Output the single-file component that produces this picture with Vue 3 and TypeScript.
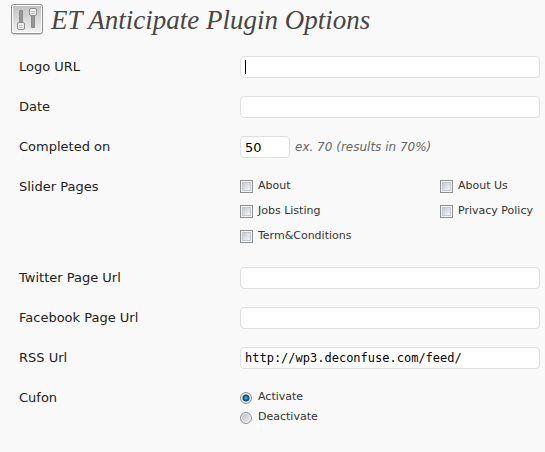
<script setup lang="ts">
import { ref } from 'vue'

interface Option {
  id: string
  label: string
}

const logoUrl = ref('')
const date = ref('')
const completed = ref('50')
const twitter = ref('')
const facebook = ref('')
const rss = ref('http://wp3.deconfuse.com/feed/')
const cufon = ref('activate')
const selectedPages = ref<string[]>([])

const pages: Option[] = [
  { id: 'about', label: 'About' },
  { id: 'about-us', label: 'About Us' },
  { id: 'jobs', label: 'Jobs Listing' },
  { id: 'privacy', label: 'Privacy Policy' },
  { id: 'terms', label: 'Term&Conditions' },
]

const cufonModes: Option[] = [
  { id: 'activate', label: 'Activate' },
  { id: 'deactivate', label: 'Deactivate' },
]
</script>

<template>
  <main class="options">
    <header class="heading">
      <svg class="heading-icon" width="32" height="31" viewBox="0 0 32 31" aria-hidden="true">
        <defs>
          <linearGradient id="plate" x1="0" y1="0" x2="0" y2="1">
            <stop offset="0" stop-color="#c2c2c2" />
            <stop offset="1" stop-color="#f1f1f1" />
          </linearGradient>
        </defs>
        <rect x="0.5" y="0.5" width="31" height="29" rx="2" fill="#fff" stroke="#8c8c8c" />
        <rect x="2" y="2" width="28" height="26" fill="url(#plate)" />
        <path d="M2 30.5H30" stroke="#d2d2d2" />
        <rect x="8" y="6" width="4" height="14" rx="1" fill="#8a8a8a" />
        <rect x="20" y="10" width="4" height="14" rx="1" fill="#8a8a8a" />
        <path d="M10 7V19M22 11V23" stroke="#a4a4a4" stroke-width="1" />
        <rect x="6.5" y="18.500" width="7" height="7" rx="1.500" fill="#f4f4f4" stroke="#8c8c8c" />
        <rect x="18.500" y="4.500" width="7" height="7" rx="1.500" fill="#f4f4f4" stroke="#8c8c8c" />
        <path d="M8 21.500H12M8 23.500H12M20 7.500H24M20 9.500H24" stroke="#bdbdbd" />
      </svg>
      <h1>ET Anticipate Plugin Options</h1>
    </header>

    <form @submit.prevent>
      <div class="row">
        <label class="name" for="logo-url">Logo URL</label>
        <div class="field caret-field">
          <input id="logo-url" v-model="logoUrl" class="text" type="text" />
          <span v-if="!logoUrl" class="caret"></span>
        </div>
      </div>
      <div class="row">
        <label class="name" for="date">Date</label>
        <input id="date" v-model="date" class="text" type="text" />
      </div>
      <div class="row">
        <label class="name" for="completed">Completed on</label>
        <div class="field inline">
          <input id="completed" v-model="completed" class="text small" type="text" />
          <em class="hint">ex. 70 (results in 70%)</em>
        </div>
      </div>
      <div class="row" role="group" aria-labelledby="pages-name">
        <span id="pages-name" class="name">Slider Pages</span>
        <div class="pages">
          <label v-for="page in pages" :key="page.id" class="choice">
            <input v-model="selectedPages" type="checkbox" :value="page.id" />
            <span>{{ page.label }}</span>
          </label>
        </div>
      </div>
      <div class="row">
        <label class="name" for="twitter">Twitter Page Url</label>
        <input id="twitter" v-model="twitter" class="text" type="text" />
      </div>
      <div class="row">
        <label class="name" for="facebook">Facebook Page Url</label>
        <input id="facebook" v-model="facebook" class="text" type="text" />
      </div>
      <div class="row">
        <label class="name" for="rss">RSS Url</label>
        <input id="rss" v-model="rss" class="text code" type="text" />
      </div>
      <div class="row" role="radiogroup" aria-labelledby="cufon-name">
        <span id="cufon-name" class="name">Cufon</span>
        <div class="modes">
          <label v-for="mode in cufonModes" :key="mode.id" class="choice">
            <input v-model="cufon" type="radio" name="cufon" :value="mode.id" />
            <span>{{ mode.label }}</span>
          </label>
        </div>
      </div>
    </form>
  </main>
</template>

<style>
body {
  background: #f9f9f9;
}
</style>

<style scoped>
.options {
  font-family: Verdana, "DejaVu Sans", sans-serif;
  font-size: 13px;
  color: #222;
}

.heading {
  display: flex;
  align-items: flex-start;
  gap: 8px;
  height: 43px;
  padding: 4px 11px 0;
}

.heading-icon {
  flex: none;
}

h1 {
  margin: 0;
  font-family: Georgia, "Liberation Serif", serif;
  font-size: 27px;
  font-style: italic;
  font-weight: 400;
  line-height: 32px;
  color: #464646;
  white-space: nowrap;
}

.row {
  display: grid;
  grid-template-columns: 221px minmax(0, 1fr);
  align-items: start;
  padding: 9px 5px 9px 19px;
}

.name {
  line-height: 22px;
}

.text {
  box-sizing: border-box;
  display: block;
  width: 100%;
  height: 22px;
  margin: 0;
  padding: 0 4px;
  border: 1px solid #dfdfdf;
  border-radius: 4px;
  outline: none;
  background: #fff;
  color: #000;
  font-family: inherit;
  font-size: 13px;
}

.small {
  width: 50px;
}

.code {
  font-family: Consolas, "DejaVu Sans Mono", monospace;
  font-size: 12px;
}

.inline {
  display: flex;
  align-items: center;
  gap: 5px;
}

.hint {
  color: #666;
  font-size: 12px;
  line-height: 22px;
  white-space: nowrap;
}

.caret-field {
  position: relative;
}

.caret {
  position: absolute;
  top: 4px;
  left: 5px;
  width: 1px;
  height: 14px;
  background: #000;
}

.caret-field:focus-within .caret {
  display: none;
}

.pages {
  display: grid;
  grid-template-columns: 2fr 1fr;
  gap: 9px 0;
  padding: 2px 0 5px;
}

.modes {
  display: grid;
  gap: 4px;
  padding: 2px 0;
}

.choice {
  display: flex;
  gap: 5px;
  font-size: 11px;
  line-height: 16px;
  color: #333;
  white-space: nowrap;
}

.choice input {
  appearance: none;
  flex: none;
  box-sizing: border-box;
  width: 13px;
  height: 13px;
  margin: 2px 0 0;
}

.choice input[type="checkbox"] {
  border: 1px solid #8e8f8f;
  background: linear-gradient(135deg, #c4c9d2, #f6f6f6) content-box;
  background-color: #f4f4f4;
  box-shadow: inset 0 0 0 1px #f4f4f4, inset 0 0 0 2px #c4c7ce;
  padding: 2px;
}

.choice input[type="checkbox"]:checked {
  background: #27617f content-box;
}

.choice input[type="radio"] {
  width: 12px;
  height: 12px;
  margin: 3px 1px 0 0;
  border: 1px solid #8e8f8f;
  border-radius: 50%;
  background: linear-gradient(135deg, #b5bac2, #f5f5f5);
  box-shadow: inset 0 0 0 1px #f2f2f2;
}

.choice input[type="radio"]:checked {
  background: radial-gradient(circle at 5px 5px, #7fd0f0 0, #2f8fbd 1px, #12466b 3px, #12466b 3px, #d5dade 4px);
}
</style>
